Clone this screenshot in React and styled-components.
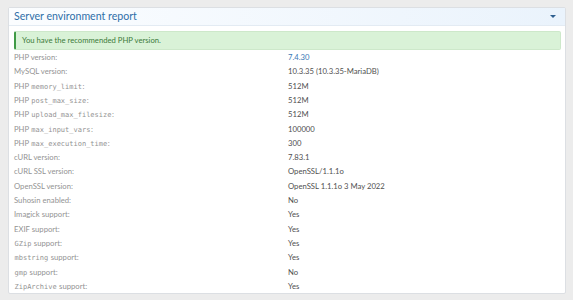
import React from "react";
import styled, { createGlobalStyle } from "styled-components";

const Global = createGlobalStyle`
  html, body { margin: 0; padding: 0; background: #ececec; }
  body { font-family: Lato, "Open Sans", sans-serif; }
`;

const Page = styled.div`
  padding: 7px 7px 6px 8px;
`;

const Panel = styled.section`
  background: #fff;
  border: 1px solid #dcdfe3;
  border-radius: 2px;
  height: 285px;
  display: flex;
  flex-direction: column;
`;

const Header = styled.header`
  display: flex;
  align-items: center;
  justify-content: space-between;
  height: 19px;
  padding: 0 9px 0 5px;
  background: linear-gradient(to right, #fbfdff, #eaf3fc);
  border-bottom: 1px solid #e3ebf3;
`;

const Title = styled.h2`
  margin: 0;
  font-size: 10.6px;
  font-weight: 400;
  color: #2f6fa8;
`;

const Caret = styled.span`
  width: 0;
  height: 0;
  border-left: 3px solid transparent;
  border-right: 3px solid transparent;
  border-top: 3px solid #2d5f8f;
  margin-top: 1px;
`;

const Body = styled.div`
  padding: 4px 4px 0 5px;
`;

const Alert = styled.div`
  height: 17px;
  display: flex;
  align-items: center;
  padding-left: 6px;
  background: #d9f2d7;
  border: 1px solid #cde8ca;
  border-left: 2px solid #3f9a45;
  border-radius: 2px;
  font-size: 7.7px;
  color: #3d7a3a;
  margin-top: 1px;
`;

const Table = styled.dl`
  margin: 0;
  display: grid;
  grid-template-columns: 274px 1fr;
  grid-auto-rows: 14.3px;
  align-items: center;
  font-size: 7.7px;
`;

const Label = styled.dt`
  color: #939393;
  white-space: nowrap;
`;

const Value = styled.dd`
  margin: 0;
  color: ${(p) => (p.$link ? "#3a78b5" : "#505050")};
  white-space: nowrap;
`;

const Code = styled.code`
  font-family: "DejaVu Sans Mono", "Liberation Mono", monospace;
  font-size: 7px;
  margin: 0 0.5px;
`;

const rows = [
  [<>PHP version:</>, "7.4.30", true],
  [<>MySQL version:</>, "10.3.35 (10.3.35-MariaDB)"],
  [<>PHP <Code>memory_limit</Code>:</>, "512M"],
  [<>PHP <Code>post_max_size</Code>:</>, "512M"],
  [<>PHP <Code>upload_max_filesize</Code>:</>, "512M"],
  [<>PHP <Code>max_input_vars</Code>:</>, "100000"],
  [<>PHP <Code>max_execution_time</Code>:</>, "300"],
  [<>cURL version:</>, "7.83.1"],
  [<>cURL SSL version:</>, "OpenSSL/1.1.1o"],
  [<>OpenSSL version:</>, "OpenSSL 1.1.1o 3 May 2022"],
  [<>Suhosin enabled:</>, "No"],
  [<>Imagick support:</>, "Yes"],
  [<>EXIF support:</>, "Yes"],
  [<><Code>GZip</Code> support:</>, "Yes"],
  [<><Code>mbstring</Code> support:</>, "Yes"],
  [<><Code>gmp</Code> support:</>, "No"],
  [<><Code>ZipArchive</Code> support:</>, "Yes"],
];

export default function App() {
  return (
    <Page>
      <Global />
      <Panel>
        <Header>
          <Title>Server environment report</Title>
          <Caret />
        </Header>
        <Body>
          <Alert>You have the recommended PHP version.</Alert>
          <Table>
            {rows.map(([label, value, link], i) => (
              <React.Fragment key={i}>
                <Label>{label}</Label>
                <Value $link={link}>{value}</Value>
              </React.Fragment>
            ))}
          </Table>
        </Body>
      </Panel>
    </Page>
  );
}
